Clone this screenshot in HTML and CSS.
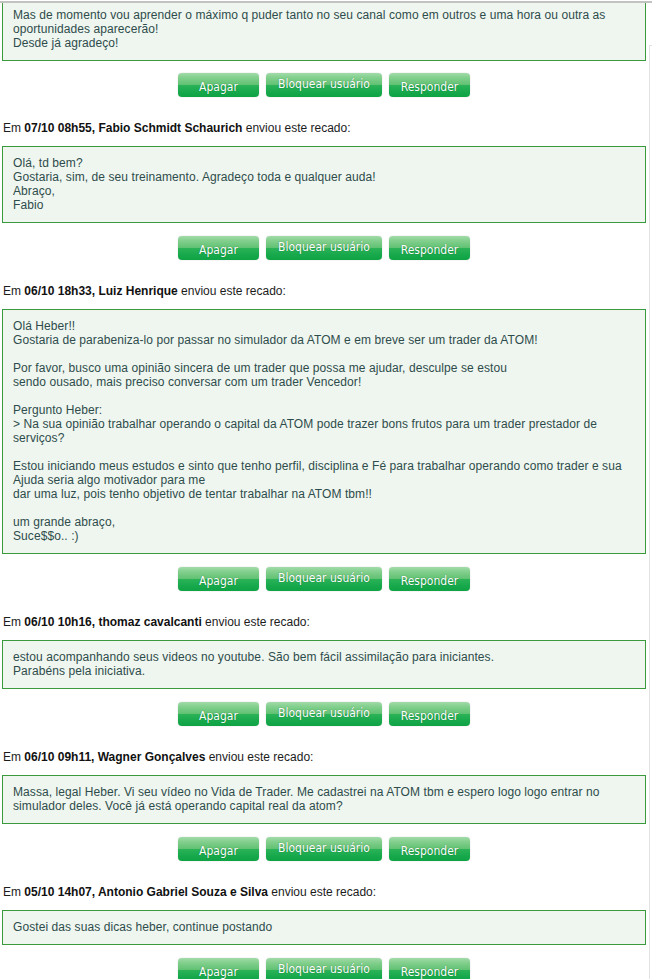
FILE: index.html
```html
<!DOCTYPE html>
<html lang="pt-BR">
<head>
<meta charset="utf-8">
<title>Recados</title>
<link rel="stylesheet" href="styles.css">
</head>
<body>
<div class="topline"></div>
<div class="page">
  <main class="main">
    <div class="box box-cut">
      Mas de momento vou aprender o máximo q puder tanto no seu canal como em outros e uma hora ou outra as<br>
      oportunidades aparecerão!<br>
      Desde já agradeço!
    </div>
    <div class="actions">
      <button class="btn btn-sm">Apagar</button>
      <button class="btn btn-lg">Bloquear usuário</button>
      <button class="btn btn-sm">Responder</button>
    </div>

    <p class="head">Em <b>07/10 08h55, Fabio Schmidt Schaurich</b> enviou este recado:</p>
    <div class="box">
      Olá, td bem?<br>
      Gostaria, sim, de seu treinamento. Agradeço toda e qualquer auda!<br>
      Abraço,<br>
      Fabio
    </div>
    <div class="actions">
      <button class="btn btn-sm">Apagar</button>
      <button class="btn btn-lg">Bloquear usuário</button>
      <button class="btn btn-sm">Responder</button>
    </div>

    <p class="head">Em <b>06/10 18h33, Luiz Henrique</b> enviou este recado:</p>
    <div class="box">
      Olá Heber!!<br>
      Gostaria de parabeniza-lo por passar no simulador da ATOM e em breve ser um trader da ATOM!<br>
      <br>
      Por favor, busco uma opinião sincera de um trader que possa me ajudar, desculpe se estou<br>
      sendo ousado, mais preciso conversar com um trader Vencedor!<br>
      <br>
      Pergunto Heber:<br>
      &gt; Na sua opinião trabalhar operando o capital da ATOM pode trazer bons frutos para um trader prestador de<br>
      serviços?<br>
      <br>
      Estou iniciando meus estudos e sinto que tenho perfil, disciplina e Fé para trabalhar operando como trader e sua<br>
      Ajuda seria algo motivador para me<br>
      dar uma luz, pois tenho objetivo de tentar trabalhar na ATOM tbm!!<br>
      <br>
      um grande abraço,<br>
      Suce$$o.. :)
    </div>
    <div class="actions">
      <button class="btn btn-sm">Apagar</button>
      <button class="btn btn-lg">Bloquear usuário</button>
      <button class="btn btn-sm">Responder</button>
    </div>

    <p class="head">Em <b>06/10 10h16, thomaz cavalcanti</b> enviou este recado:</p>
    <div class="box">
      estou acompanhando seus videos no youtube. São bem fácil assimilação para iniciantes.<br>
      Parabéns pela iniciativa.
    </div>
    <div class="actions">
      <button class="btn btn-sm">Apagar</button>
      <button class="btn btn-lg">Bloquear usuário</button>
      <button class="btn btn-sm">Responder</button>
    </div>

    <p class="head">Em <b>06/10 09h11, Wagner Gonçalves</b> enviou este recado:</p>
    <div class="box">
      Massa, legal Heber. Vi seu vídeo no Vida de Trader. Me cadastrei na ATOM tbm e espero logo logo entrar no<br>
      simulador deles. Você já está operando capital real da atom?
    </div>
    <div class="actions">
      <button class="btn btn-sm">Apagar</button>
      <button class="btn btn-lg">Bloquear usuário</button>
      <button class="btn btn-sm">Responder</button>
    </div>

    <p class="head">Em <b>05/10 14h07, Antonio Gabriel Souza e Silva</b> enviou este recado:</p>
    <div class="box">
      Gostei das suas dicas heber, continue postando
    </div>
    <div class="actions">
      <button class="btn btn-sm">Apagar</button>
      <button class="btn btn-lg">Bloquear usuário</button>
      <button class="btn btn-sm">Responder</button>
    </div>
  </main>
  <aside class="side"></aside>
</div>
</body>
</html>
```

FILE: styles.css
```css
* { box-sizing: border-box; }

html, body {
  margin: 0;
  padding: 0;
  background: #ffffff;
}

body {
  font-family: "Liberation Sans", Arial, sans-serif;
  font-size: 12px;
  line-height: 14px;
  color: #222222;
  overflow: hidden;
}

.topline {
  margin-top: 1px;
  height: 2px;
  background: #c2c2c2;
}

.page {
  display: flex;
  align-items: flex-start;
}

.main {
  width: 648px;
  flex: none;
  padding: 0 2px;
}

.side {
  flex: none;
  width: 3px;
  margin-left: 1px;
  margin-top: 42px;
  height: 1200px;
  border-left: 1px solid #e2e2e2;
  border-top: 1px solid #e2e2e2;
}

.box {
  background: #eff6ef;
  border: 1px solid #3b9a3b;
  color: #2e4c4c;
  padding: 9px 10px 10px 10px;
  margin: 11px 0 0 0;
  letter-spacing: 0.08px;
}

.box-cut {
  border-top: none;
  margin-top: 0;
  padding-top: 5px;
}

.head {
  margin: 24px 0 0 1px;
  color: #1c1c1c;
}

.head b {
  font-weight: bold;
  color: #111111;
}

.actions {
  display: flex;
  justify-content: center;
  gap: 7px;
  margin-top: 13px;
}

.box-cut + .actions {
  margin-top: 12px;
}

.btn {
  height: 24px;
  border: none;
  border-radius: 4px;
  padding: 3px 0 0 0;
  font-family: "DejaVu Sans Condensed", "DejaVu Sans", sans-serif;
  font-stretch: condensed;
  font-size: 12px;
  color: #ffffff;
  text-shadow: 0 0 1px rgba(0, 70, 20, 0.6);
  background: linear-gradient(to bottom,
    #a2dba9 0%,
    #82cf8d 20%,
    #62c274 48%,
    #2bb257 52%,
    #16a84b 80%,
    #0fa344 100%);
  box-shadow: 0 0 1px rgba(0, 0, 0, 0.35);
  cursor: pointer;
}

.btn-sm {
  width: 81px;
}

.btn-lg {
  width: 116px;
  padding: 0 0 3px 0;
}
```
